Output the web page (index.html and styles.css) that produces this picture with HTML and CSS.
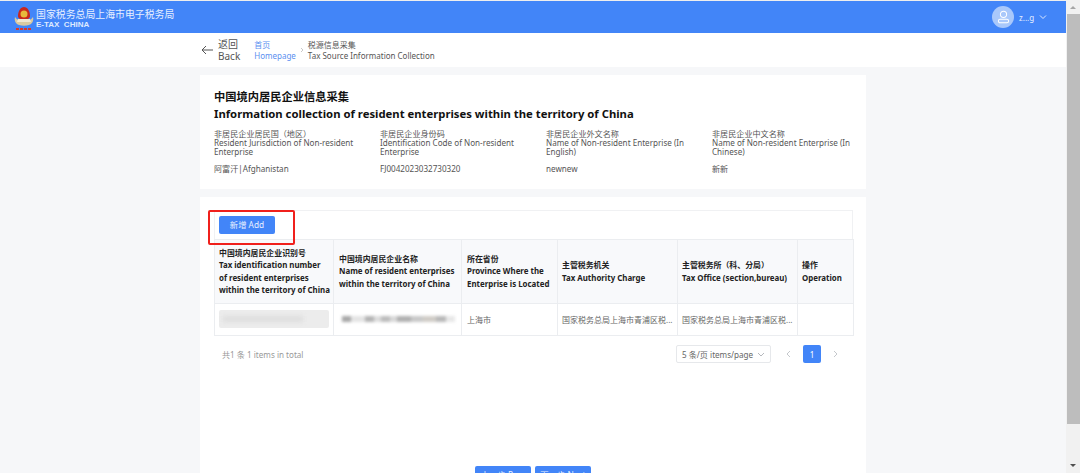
FILE: index.html
```html
<!DOCTYPE html>
<html lang="zh">
<head>
<meta charset="utf-8">
<title>中国境内居民企业信息采集</title>
<link rel="stylesheet" href="styles.css">
</head>
<body>
<div class="window">
  <div class="main">
    <header class="topbar">
      <div class="brand">
        <svg class="logo" width="22" height="26" viewBox="0 0 22 26">
          <path d="M2 12c-1 4 1 7 4 8 3 1 7 1 10 0 3-1 5-4 4-8-2 3-5 4-9 4s-7-1-9-4z" fill="#d9c9a0"/>
          <path d="M5 11c0-5 2.500-9 6-9s6 4 6 9c0 2.500-3 4-6 4s-6-1.500-6-4z" fill="#c8281e"/>
          <circle cx="11" cy="9" r="3.500" fill="#e8b93c"/>
          <path d="M5 14h12l1 3H4z" fill="#efe6d0"/>
          <path d="M3 24h16" stroke="#d8382c" stroke-width="2" stroke-dasharray="3 1"/>
        </svg>
        <div class="brand-text">
          <div class="brand-cn">国家税务总局上海市电子税务局</div>
          <div class="brand-en">E-TAX&nbsp; CHINA</div>
        </div>
      </div>
      <div class="user">
        <span class="avatar">
          <svg width="16" height="18" viewBox="0 0 16 18" fill="none" stroke="#fff" stroke-width="1.300">
            <circle cx="8" cy="5.500" r="4"/>
            <rect x="1.500" y="12" width="13" height="4.500" rx="2"/>
          </svg>
        </span>
        <span class="user-name">z...g</span>
        <svg class="user-caret" width="8" height="6" viewBox="0 0 8 6" fill="none" stroke="#dce8ff" stroke-width="1"><path d="M1 1.500l3 3 3-3"/></svg>
      </div>
    </header>
    <nav class="crumbs">
      <svg class="back-arrow" width="12" height="10" viewBox="0 0 12 10" fill="none" stroke="#555" stroke-width="1"><path d="M12 5H1M5 1L1 5l4 4"/></svg>
      <div class="back-text"><div>返回</div><div>Back</div></div>
      <div class="crumb-link"><div>首页</div><div>Homepage</div></div>
      <svg class="crumb-sep" width="4" height="6" viewBox="0 0 4 6" fill="none" stroke="#c8c8c8" stroke-width="1"><path d="M1 1l2 2-2 2"/></svg>
      <div class="crumb-current"><div>税源信息采集</div><div>Tax Source Information Collection</div></div>
    </nav>
    <div class="content">
      <section class="card info-card">
        <h1 class="title"><span class="title-cn">中国境内居民企业信息采集</span><span>Information collection of resident enterprises within the territory of China</span></h1>
        <div class="fields">
          <div class="field">
            <div class="field-label">非居民企业居民国（地区）<br>Resident Jurisdiction of Non-resident Enterprise</div>
            <div class="field-value">阿富汗|Afghanistan</div>
          </div>
          <div class="field">
            <div class="field-label">非居民企业身份码<br>Identification Code of Non-resident Enterprise</div>
            <div class="field-value">FJ0042023032730320</div>
          </div>
          <div class="field">
            <div class="field-label">非居民企业外文名称<br>Name of Non-resident Enterprise (In English)</div>
            <div class="field-value">newnew</div>
          </div>
          <div class="field">
            <div class="field-label">非居民企业中文名称<br>Name of Non-resident Enterprise (In Chinese)</div>
            <div class="field-value">新新</div>
          </div>
        </div>
      </section>
      <section class="card list-card">
        <div class="toolbar">
          <button class="btn">新增 Add</button>
          <span class="highlight"></span>
        </div>
        <table class="grid">
          <colgroup>
            <col class="c1"><col class="c2"><col class="c3"><col class="c4"><col class="c5"><col class="c6">
          </colgroup>
          <thead>
            <tr>
              <th>中国境内居民企业识别号<br>Tax identification number<br>of resident enterprises<br>within the territory of China</th>
              <th>中国境内居民企业名称<br>Name of resident enterprises<br>within the territory of China</th>
              <th>所在省份<br>Province Where the<br>Enterprise is Located</th>
              <th>主管税务机关<br>Tax Authority Charge</th>
              <th>主管税务所（科、分局）<br>Tax Office (section,bureau)</th>
              <th>操作<br>Operation</th>
            </tr>
          </thead>
          <tbody>
            <tr>
              <td><div class="mask-box"><span class="blur-line"></span></div></td>
              <td><span class="blur-strip"></span></td>
              <td>上海市</td>
              <td>国家税务总局上海市青浦区税...</td>
              <td>国家税务总局上海市青浦区税...</td>
              <td></td>
            </tr>
          </tbody>
        </table>
        <div class="pager">
          <span class="total">共1 条 1 items in total</span>
          <div class="pager-right">
            <div class="select">5 条/页 items/page
              <svg width="8" height="5" viewBox="0 0 8 5" fill="none" stroke="#b5b8bd" stroke-width="1"><path d="M1 1l3 3 3-3"/></svg>
            </div>
            <svg class="page-arrow" width="5" height="8" viewBox="0 0 5 8" fill="none" stroke="#c5c8cc" stroke-width="1"><path d="M4 1L1 4l3 3"/></svg>
            <span class="page-current">1</span>
            <svg class="page-arrow" width="5" height="8" viewBox="0 0 5 8" fill="none" stroke="#c5c8cc" stroke-width="1"><path d="M1 1l3 3-3 3"/></svg>
          </div>
        </div>
        <div class="actions">
          <button class="btn">上一步 Prev</button>
          <button class="btn">下一步 Next</button>
        </div>
      </section>
    </div>
  </div>
  <aside class="scrollbar">
    <span class="sb-up"></span>
    <span class="sb-thumb"></span>
    <span class="sb-down"></span>
  </aside>
</div>
</body>
</html>
```
FILE: styles.css
```css
* { box-sizing: border-box; }
html, body { margin: 0; height: 473px; overflow: hidden; }
body {
  font-family: "Noto Sans", "Noto Sans CJK SC", sans-serif;
  color: #444;
  background: #f6f7f9;
}
.window { display: flex; height: 473px; padding-top: 1px; background: #eee; }
.main { flex: 1; min-width: 0; display: flex; flex-direction: column; background: #f6f7f9; }

.topbar {
  height: 32px;
  flex: none;
  background: #4285f8;
  display: flex;
  align-items: center;
  justify-content: space-between;
  padding: 0 19px 0 13px;
  color: #fff;
}
.brand { display: flex; align-items: center; gap: 1px; }
.logo { flex: none; margin-top: 2px; }
.brand-text { display: flex; flex-direction: column; margin-top: 3px; }
.brand-cn { font-size: 9.900px; line-height: 12px; color: #e6efff; }
.brand-en { font-size: 8px; line-height: 9px; font-weight: 600; color: #dfeaff; font-family: "Liberation Sans", sans-serif; }
.user { display: flex; align-items: center; }
.avatar {
  width: 22px; height: 22px; border-radius: 50%;
  background: #a9c8fb;
  display: flex; align-items: center; justify-content: center;
  margin-right: 5px;
}
.avatar svg { width: 13px; height: 14px; }
.user-name { font-size: 8px; color: #e6efff; width: 19px; }
.user-caret { margin-left: 1px; }

.crumbs {
  height: 34px;
  flex: none;
  background: #fff;
  display: flex;
  align-items: center;
  padding-left: 201px;
  font-size: 8px;
  line-height: 11px;
}
.back-arrow { margin-right: 5px; }
.back-text { font-size: 10px; line-height: 12px; color: #555; margin-right: 14px; }
.crumb-link { color: #5b8ff0; }
.crumb-sep { margin: 0 4px 0 4px; }
.crumb-current { color: #555; }

.content { flex: 1; min-height: 0; display: flex; flex-direction: column; gap: 8px; padding: 8px 200px 0; }
.card { background: #fff; padding: 0 14px; }

.info-card { height: 114px; padding-top: 13px; }
.title { margin: 0; font-size: 11.300px; line-height: 17px; font-weight: 700; color: #111; display: flex; flex-direction: column; }
.title-cn { font-size: 11.250px; }
.fields { display: grid; grid-template-columns: repeat(4, 166px); margin-top: 7px; }
.field { font-size: 8.100px; line-height: 9px; }
.field-label { height: 31px; padding-right: 14px; color: #555; }
.field-value { margin-top: 3px; line-height: 11px; color: #555; }

.list-card { flex: 1; min-height: 0; padding-top: 13px; display: flex; flex-direction: column; }
.toolbar {
  position: relative;
  flex: none;
  height: 29px;
  width: 639px;
  border: 1px solid #f0f1f3;
  border-bottom: 0;
  padding: 5px 0 0 4px;
  display: flex;
  align-items: flex-start;
}
.btn {
  display: block;
  height: 18px;
  width: 56px;
  padding: 0;
  border: 0;
  border-radius: 2px;
  background: #4285f8;
  color: #e8f0ff;
  font: inherit;
  font-size: 8.300px;
  line-height: 18px;
  white-space: nowrap;
}
.highlight {
  position: absolute;
  left: -7px; top: -1px;
  width: 87px; height: 35px;
  border: 2px solid #f0201c;
  border-radius: 2px;
  z-index: 2;
  pointer-events: none;
}
.grid {
  flex: none;
  width: 639px;
  table-layout: fixed;
  border-collapse: collapse;
  font-size: 7.900px;
}
.c1 { width: 119px; } .c2 { width: 128px; } .c3 { width: 96px; }
.c4 { width: 120px; } .c5 { width: 120px; } .c6 { width: 56px; }
.grid th, .grid td { border: 1px solid #ebedf0; padding: 0 0 0 4px; text-align: left; white-space: nowrap; }
.grid th:nth-child(2), .grid th:nth-child(3), .grid td:nth-child(2), .grid td:nth-child(3) { padding-left: 5px; }
.grid th { height: 64px; background: #f8f9fb; color: #222; line-height: 12.400px; font-weight: 700; }
.grid td { height: 32px; color: #666; overflow: hidden; padding-bottom: 1px; font-size: 8px; }
.mask-box { height: 18px; width: 110px; background: #ececec; border-radius: 2px; display: flex; align-items: center; padding: 0 4px; }
.blur-line { display: block; width: 78%; height: 6px; background: #dedede; filter: blur(2px); }
.blur-strip {
  display: block; height: 6px; width: 116px;
  background: linear-gradient(90deg, #fff 0 3%, #a8a8a8 3% 10%, #e4e4e4 10% 22%, #b4b4b4 22% 30%, #dcdcdc 30% 36%, #bcbcbc 36% 44%, #d8d8d8 44% 50%, #b0b0b0 50% 62%, #c8c8c8 62% 72%, #d0ccc6 72% 84%, #b8b8b8 84% 92%, #e8e8e8 92%);
  filter: blur(1.500px);
}

.pager { flex: none; display: flex; align-items: center; justify-content: space-between; margin-top: 9px; font-size: 8.100px; color: #999; padding-left: 8px; }
.pager-right { display: flex; align-items: center; padding-right: 14px; }
.select {
  width: 95px; height: 18px;
  border: 1px solid #e6e8eb; border-radius: 2px;
  padding: 0 5px;
  display: flex; align-items: center; justify-content: space-between;
  color: #666;
  margin-right: 15px;
}
.page-current {
  width: 18px; height: 18px; margin: 0 12px;
  background: #4285f8; color: #fff; border-radius: 2px;
  display: flex; align-items: center; justify-content: center;
}
.actions { flex: none; display: flex; justify-content: center; gap: 4px; margin-top: 103px; }

.scrollbar { width: 14px; flex: none; background: #f1f1f1; display: flex; flex-direction: column; align-items: center; margin-top: -1px; }
.sb-up { width: 0; height: 0; margin: 6px 0 5px; border: 3px solid transparent; border-top: 0; border-bottom: 3px solid #a6a6a6; }
.sb-thumb { width: 13px; height: 410px; background: #bdbdbd; margin-bottom: auto; }
.sb-down { width: 0; height: 0; margin-bottom: 6px; border: 3px solid transparent; border-bottom: 0; border-top: 3px solid #505050; }
```
